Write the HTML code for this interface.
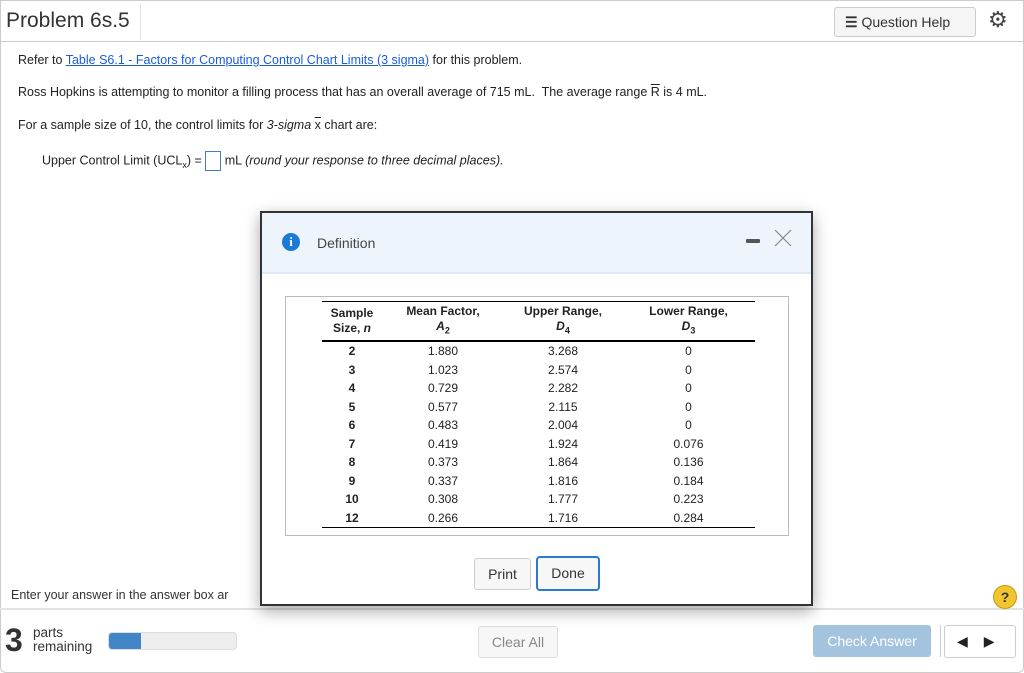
<!DOCTYPE html>
<html><head><style>
body{margin:0;width:1024px;height:673px;background:#fff;font-family:"Liberation Sans",Arial,sans-serif;position:relative;overflow:hidden;color:#222}
.a{position:absolute}
.t{font-size:12.5px}
table{border-collapse:collapse;font-size:12px}
td{text-align:center;padding:0;height:18.5px}
</style></head><body>
<div class="a" style="left:0;top:0;width:1022px;height:671px;border:1px solid #ccc;border-radius:0 0 6px 6px"></div>
<div class="a" style="left:0;top:41px;width:1024px;border-top:1px solid #ccc"></div>
<div class="a" style="left:6px;top:9px;font-size:21px;color:#333">Problem 6s.5</div>
<div class="a" style="left:140px;top:4px;height:36px;border-left:1px solid #e6e6e6"></div>
<div class="a" style="left:834px;top:7px;width:140px;height:28px;border:1px solid #ccc;border-radius:3px;background:#f5f5f5;font-size:14px;line-height:28px;color:#333"><span style="margin-left:10px;font-weight:bold">&#9776;</span> Question Help</div>
<div class="a" style="left:988px;top:7px;font-size:22px;color:#444">&#9881;</div>
<div class="a t" style="left:18px;top:53px">Refer to <span style="color:#1a5dd4;text-decoration:underline">Table S6.1 - Factors for Computing Control Chart Limits (3 sigma)</span> for this problem.</div>
<div class="a t" style="left:18px;top:85px">Ross Hopkins is attempting to monitor a filling process that has an overall average of 715 mL.&nbsp; The average range <span style="text-decoration:overline">R</span> is 4 mL.</div>
<div class="a t" style="left:18px;top:118px">For a sample size of 10, the control limits for <i>3-sigma</i> <span style="text-decoration:overline">x</span> chart are:</div>
<div class="a t" style="left:42px;top:151px">Upper Control Limit (UCL<sub style="font-size:9px">x</sub>) = <span style="display:inline-block;width:14px;height:18px;border:1px solid #3b7fc4;vertical-align:middle"></span> mL <i>(round your response to three decimal places).</i></div>
<div class="a t" style="left:11px;top:588px;color:#333">Enter your answer in the answer box ar</div>
<div class="a" style="left:0;top:608px;width:1024px;border-top:2px solid #e3e3e3"></div>
<div class="a" style="left:993px;top:585px;width:22px;height:22px;border-radius:50%;background:#f2c430;border:1px solid #c79a10;text-align:center;font-size:14px;font-weight:bold;line-height:22px;color:#333">?</div>
<div class="a" style="left:5px;top:622px;font-size:32px;font-weight:bold;color:#333">3</div>
<div class="a" style="left:33px;top:626px;font-size:13.5px;line-height:14px;color:#333">parts<br>remaining</div>
<div class="a" style="left:108px;top:632px;width:127px;height:16px;border:1px solid #ddd;border-radius:4px;background:#eee;overflow:hidden"><div style="width:32px;height:16px;background:#4286c8"></div></div>
<div class="a" style="left:478px;top:626px;width:78px;height:30px;border:1px solid #ddd;border-radius:3px;background:#f7f7f7;text-align:center;line-height:30px;font-size:14px;color:#888">Clear All</div>
<div class="a" style="left:813px;top:625px;width:118px;height:32px;border-radius:3px;background:#a3c3df;text-align:center;line-height:32px;font-size:14px;color:#fff">Check Answer</div>
<div class="a" style="left:940px;top:625px;height:32px;border-left:1px solid #ccc"></div>
<div class="a" style="left:944px;top:625px;width:70px;height:31px;border:1px solid #ccc;border-radius:3px;font-size:14px;line-height:31px"><span style="margin-left:12px">&#9664;</span><span style="margin-left:16px">&#9654;</span></div>
<!-- modal -->
<div class="a" style="left:260px;top:211px;width:549px;height:391px;border:2px solid #333;background:#fff;box-shadow:0 5px 15px rgba(0,0,0,.35)">
<div style="height:59px;background:#eef4fc;border-bottom:2px solid #dde9f6;position:relative">
<div class="a" style="left:20px;top:20px;width:18px;height:18px;border-radius:50%;background:#1a7ad4;color:#fff;text-align:center;font:bold 13px/18px 'Liberation Serif',serif">i</div>
<div class="a" style="left:55px;top:22px;font-size:14px;color:#444">Definition</div>
<div class="a" style="left:484px;top:26px;width:14px;height:4px;background:#555;border-radius:1px"></div>
<svg class="a" style="left:511px;top:15px" width="20" height="20"><path d="M2 2L18 18M18 2L2 18" stroke="#888" stroke-width="1.2"/></svg>
</div>
<div class="a" style="left:23px;top:83px;width:502px;height:238px;border:1px solid #bbb"></div>
<table class="a" style="left:60px;top:88px;width:433px;border-top:1px solid #000">
<tr style="font-weight:bold;border-bottom:2px solid #000"><td style="width:60px;height:38px;line-height:15px">Sample<br>Size, <i>n</i></td><td style="width:122px;line-height:15px">Mean Factor,<br><i>A</i><sub style="font-size:9px">2</sub></td><td style="width:118px;line-height:15px">Upper Range,<br><i>D</i><sub style="font-size:9px">4</sub></td><td style="line-height:15px">Lower Range,<br><i>D</i><sub style="font-size:9px">3</sub></td></tr>
<tr><td><b>2</b></td><td>1.880</td><td>3.268</td><td>0</td></tr>
<tr><td><b>3</b></td><td>1.023</td><td>2.574</td><td>0</td></tr>
<tr><td><b>4</b></td><td>0.729</td><td>2.282</td><td>0</td></tr>
<tr><td><b>5</b></td><td>0.577</td><td>2.115</td><td>0</td></tr>
<tr><td><b>6</b></td><td>0.483</td><td>2.004</td><td>0</td></tr>
<tr><td><b>7</b></td><td>0.419</td><td>1.924</td><td>0.076</td></tr>
<tr><td><b>8</b></td><td>0.373</td><td>1.864</td><td>0.136</td></tr>
<tr><td><b>9</b></td><td>0.337</td><td>1.816</td><td>0.184</td></tr>
<tr><td><b>10</b></td><td>0.308</td><td>1.777</td><td>0.223</td></tr>
<tr style="border-bottom:1px solid #000"><td><b>12</b></td><td>0.266</td><td>1.716</td><td>0.284</td></tr>
</table>
<div class="a" style="left:212px;top:345px;width:55px;height:30px;border:1px solid #ccc;border-radius:3px;background:#f7f7f7;text-align:center;line-height:30px;font-size:14px;color:#333">Print</div>
<div class="a" style="left:274px;top:343px;width:60px;height:31px;border:2px solid #2a7bd0;border-radius:4px;background:#f7f7f7;text-align:center;line-height:31px;font-size:14px;color:#333">Done</div>
</div>
</body></html>
